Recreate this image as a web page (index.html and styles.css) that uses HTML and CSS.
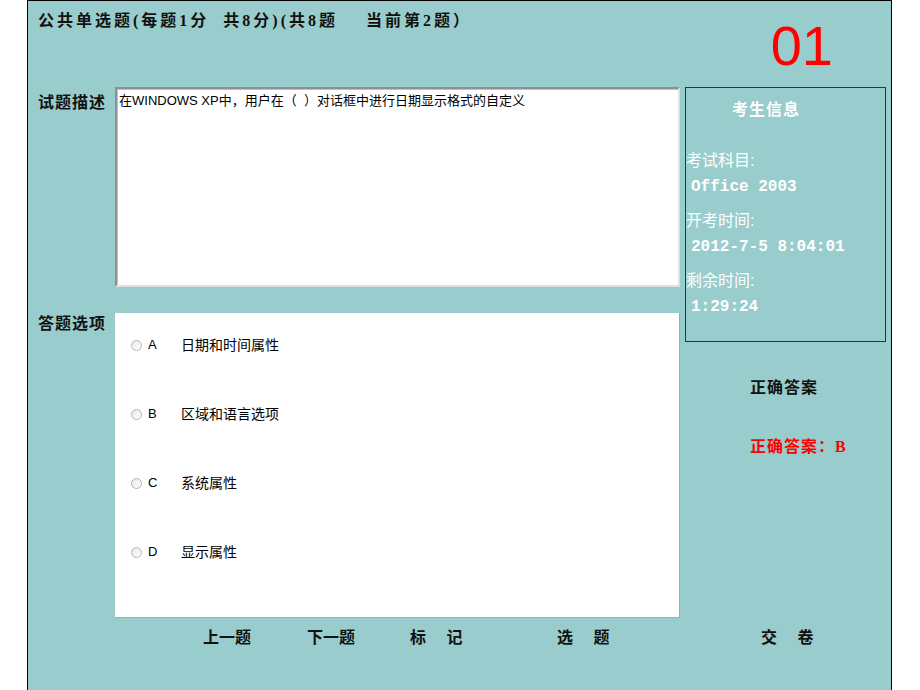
FILE: index.html
```html
<!DOCTYPE html>
<html lang="zh-CN">
<head>
  <meta charset="UTF-8" />
  <title>考试系统 - 公共单选题</title>
  <link rel="stylesheet" href="styles.css">
</head>
<body>
  <div class="frame">
    <div class="cabecera">
      <div class="titulo">公共单选题(每题1分&nbsp;&nbsp;共8分)(共8题&nbsp;&nbsp;&nbsp;&nbsp;当前第2题）</div>
      <div class="numero">01</div>
    </div>

    <div class="cuerpo">
      <div class="izquierda">
        <div class="fila">
          <div class="etiqueta">试题描述</div>
          <div class="descripcion">在WINDOWS XP中，用户在（&nbsp;&nbsp;）对话框中进行日期显示格式的自定义</div>
        </div>
        <div class="fila fila-opciones">
          <div class="etiqueta">答题选项</div>
          <div class="opciones">
            <div class="opcion"><span class="radio"></span><span class="letra">A</span>日期和时间属性</div>
            <div class="opcion"><span class="radio"></span><span class="letra">B</span>区域和语言选项</div>
            <div class="opcion"><span class="radio"></span><span class="letra">C</span>系统属性</div>
            <div class="opcion"><span class="radio"></span><span class="letra">D</span>显示属性</div>
          </div>
        </div>
      </div>

      <div class="derecha">
        <div class="info">
          <div class="info-titulo">考生信息</div>
          <div class="dato primero">考试科目:</div>
          <div class="valor">Office 2003</div>
          <div class="dato">开考时间:</div>
          <div class="valor">2012-7-5 8:04:01</div>
          <div class="dato">剩余时间:</div>
          <div class="valor">1:29:24</div>
        </div>
        <div class="respuesta">正确答案</div>
        <div class="respuesta correcta">正确答案：B</div>
      </div>
    </div>

    <div class="botones">
      <span class="b1">上一题</span>
      <span class="b2">下一题</span>
      <span class="b3">标 记</span>
      <span class="b4">选 题</span>
      <span class="b5">交 卷</span>
    </div>
  </div>
</body>
</html>
```

FILE: styles.css
```css
body {
  margin: 0;
  padding: 0;
  background: white;
  font-family: "Liberation Sans", "Noto Sans CJK SC", sans-serif;
}
.frame {
  margin-left: 27px;
  width: 865px;
  height: 720px;
  background: #99cccc;
  border: 1px solid #000;
  border-bottom: none;
  padding-left: 10px;
  box-sizing: border-box;
}
.cabecera {
  display: flex;
  justify-content: space-between;
  height: 86px;
}
.titulo {
  font-family: "Liberation Serif", "Noto Sans CJK SC", serif;
  font-weight: bold;
  font-size: 16px;
  line-height: 20px;
  margin-top: 10px;
  letter-spacing: 3px;
  color: #111;
}
.numero {
  font-family: "Liberation Sans", sans-serif;
  font-size: 56px;
  line-height: 56px;
  color: #ff0000;
  margin-top: 17px;
  margin-right: 58px;
}
.cuerpo {
  display: flex;
  gap: 5px;
}
.izquierda {
  width: 642px;
}
.fila {
  display: flex;
}
.fila-opciones {
  margin-top: 26px;
}
.etiqueta {
  width: 77px;
  font-weight: bold;
  font-size: 16px;
  line-height: 20px;
  margin-top: 6px;
  letter-spacing: 1px;
  color: #111;
}
.fila-opciones .etiqueta {
  margin-top: 1px;
}
.descripcion {
  width: 565px;
  height: 200px;
  box-sizing: border-box;
  background: white;
  border: 2px solid;
  border-color: #909090 #e0e0e0 #e0e0e0 #909090;
  box-shadow: inset 1px 1px 0 #c0c0c0;
  font-size: 13px;
  line-height: 16px;
  padding: 4px 2px;
  color: #000;
}
.opciones {
  width: 565px;
  height: 305px;
  box-sizing: border-box;
  background: white;
  border-right: 1px solid #a8a8a8;
  border-bottom: 1px solid #a8a8a8;
  padding: 24px 0 0 16px;
  display: flex;
  flex-direction: column;
  gap: 53px;
}
.opcion {
  display: flex;
  align-items: center;
  font-size: 14px;
  line-height: 16px;
  color: #000;
}
.radio {
  width: 9px;
  height: 9px;
  border: 1px solid #b4b4b4;
  border-radius: 50%;
  background: linear-gradient(135deg, #e8e8e8, #ffffff);
  margin-right: 6px;
}
.letra {
  width: 33px;
  font-size: 13px;
}
.derecha {
  width: 201px;
}
.info {
  height: 255px;
  box-sizing: border-box;
  border: 1px solid #2a3a3a;
  color: white;
  padding-top: 12px;
}
.info-titulo {
  font-weight: bold;
  font-size: 16px;
  line-height: 20px;
  padding-left: 46px;
  letter-spacing: 1px;
}
.dato {
  font-size: 16px;
  line-height: 20px;
  margin-top: 14px;
}
.dato.primero {
  margin-top: 31px;
}
.valor {
  font-family: "Liberation Mono", monospace;
  font-weight: bold;
  font-size: 16px;
  line-height: 20px;
  margin-top: 6px;
  padding-left: 5px;
}
.respuesta {
  font-weight: bold;
  font-size: 16px;
  line-height: 20px;
  margin-top: 36px;
  padding-left: 65px;
  letter-spacing: 1px;
  color: #111;
}
.respuesta.correcta {
  font-family: "Liberation Serif", "Noto Sans CJK SC", serif;
  color: #ff0000;
  margin-top: 39px;
}
.botones {
  display: flex;
  margin-top: 10px;
  padding-left: 165px;
  font-weight: bold;
  font-size: 16px;
  line-height: 20px;
  color: #111;
}
.botones span {
  word-spacing: 16px;
}
.b1 { width: 104px; }
.b2 { width: 103px; }
.b3 { width: 147px; }
.b4 { width: 204px; }
```
